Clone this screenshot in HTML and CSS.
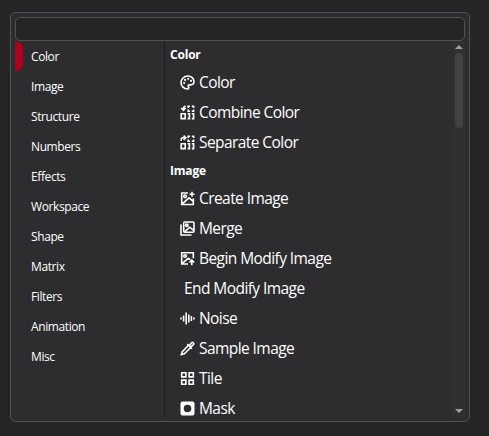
FILE: index.html
```html
<!DOCTYPE html>
<html lang="en">
<head>
<meta charset="utf-8">
<title>Add Node</title>
<link rel="stylesheet" href="styles.css">
</head>
<body>
<main class="picker">
  <input class="search" type="text" aria-label="Search">
  <div class="body">
    <nav class="categories">
      <a class="category active">Color</a>
      <a class="category">Image</a>
      <a class="category">Structure</a>
      <a class="category">Numbers</a>
      <a class="category">Effects</a>
      <a class="category">Workspace</a>
      <a class="category">Shape</a>
      <a class="category">Matrix</a>
      <a class="category">Filters</a>
      <a class="category">Animation</a>
      <a class="category">Misc</a>
    </nav>
    <section class="nodes">
      <h2 class="group">Color</h2>
      <div class="node"><svg class="icon" viewBox="0 0 15 15"><path d="M7.7 14C3.8 14 1 11.1 1 7.6S4 1 7.7 1s6.3 2.5 6.3 5.6c0 2.3-1.5 3.3-3.3 3.3H9.3c-1 0-1.4.8-.9 1.6.6 1 .5 2.5-.7 2.5z"/><g class="solid"><circle cx="4.1" cy="8" r="1.1"/><circle cx="5.1" cy="4.9" r="1.1"/><circle cx="8.2" cy="3.8" r="1.1"/><circle cx="11" cy="5.8" r="1.1"/></g></svg><span>Color</span></div>
      <div class="node"><svg class="icon" viewBox="0 0 15 15"><path d="M5.7 1.3C3.7 1.3 3.4 2 3.4 4.4M1.2 3l2.2 2.3L5.6 3M1.2 8.8h4v4.8h-4zM7.6 8.8h1.8v4.8H7.6M11.8 8.8h1.8v4.8h-1.8M8.2 3V1.2H10M11.8 1.2h1.8V3M13.6 4.6v1.6h-1.8M10 6.2H8.2V4.6"/></svg><span>Combine Color</span></div>
      <div class="node"><svg class="icon" viewBox="0 0 15 15"><path d="M1.2 6V4.7c0-1.2.6-1.9 1.8-1.9h2.4M3.6.7l2.2 2.1-2.2 2.2M1.2 8.8h4v4.8h-4zM7.6 8.8h1.8v4.8H7.6M11.8 8.8h1.8v4.8h-1.8M8.2 3V1.2H10M11.8 1.2h1.8V3M13.6 4.6v1.6h-1.8M10 6.2H8.2V4.6"/></svg><span>Separate Color</span></div>
      <h2 class="group">Image</h2>
      <div class="node"><svg class="icon" viewBox="0 0 15 15"><path d="M8 2H1.7v11.5h11.6V7.4M2 13.2l7-6.3 4.2 3.5M9.5 3.2h5M12 .7v5"/><circle cx="5" cy="5.3" r="1.3"/></svg><span>Create Image</span></div>
      <div class="node"><svg class="icon" viewBox="0 0 15 15"><rect x="3.7" y="1" width="10.3" height="10.3" rx="1"/><path d="M1 3.5V14h10.5M4.5 10.8l5.2-4.6 4 3.2"/><circle cx="6.8" cy="4.2" r="1.2"/></svg><span>Merge</span></div>
      <div class="node"><svg class="icon" viewBox="0 0 15 15"><path d="M8 13H1.7V1.7h11.6v5.6M2 12.7l6.3-5.5 2 1.4M11.8 14.3V9.5M9.4 11.5l2.4-2.4 2.4 2.4"/><circle cx="5" cy="5" r="1.3"/></svg><span>Begin Modify Image</span></div>
      <div class="node plain"><span>End Modify Image</span></div>
      <div class="node"><svg class="icon" viewBox="0 0 15 15"><path d="M1 6.5v2M3.6 4.5v6M6.2 1.5v12M8.8 3.5v8M11.4 5v5M14 6.5v2"/></svg><span>Noise</span></div>
      <div class="node"><svg class="icon" viewBox="0 0 15 15"><path d="M8.5 4.3 2.3 10.7 1.4 13.6l2.9-.9 6.4-6.2M7.3 3l4.7 4.7M9.2 4.8l2.4-3c1-1 2.8.6 1.8 1.8l-3 2.5z"/></svg><span>Sample Image</span></div>
      <div class="node"><svg class="icon" viewBox="0 0 15 15"><path d="M1.7 1.7h4.2v4.2H1.7zM9.1 1.7h4.2v4.2H9.1zM1.7 9.1h4.2v4.2H1.7zM9.1 9.1h4.2v4.2H9.1z"/></svg><span>Tile</span></div>
      <div class="node"><svg class="icon" viewBox="0 0 15 15"><path class="solid" fill-rule="evenodd" d="M2.5.5h10a2 2 0 0 1 2 2v10a2 2 0 0 1-2 2h-10a2 2 0 0 1-2-2v-10a2 2 0 0 1 2-2zM7.5 3.7a3.8 3.8 0 1 0 0 7.6 3.8 3.8 0 0 0 0-7.6z"/></svg><span>Mask</span></div>
    </section>
    <div class="scrollbar">
      <svg class="arrow" viewBox="0 0 8 4"><path d="M0 4 4 0l4 4z"/></svg>
      <div class="thumb"></div>
      <svg class="arrow down" viewBox="0 0 8 4"><path d="M0 0h8L4 4z"/></svg>
    </div>
  </div>
</main>
</body>
</html>
```
FILE: styles.css
```css
* { box-sizing: border-box; }

body {
  margin: 0;
  height: 436px;
  padding: 12px 19px 14px 10px;
  overflow: hidden;
  background: #252525;
  color: #fff;
  font-family: "Open Sans", "Noto Sans", sans-serif;
}

.picker {
  display: flex;
  flex-direction: column;
  height: 410px;
  padding: 4px;
  border: 1px solid #525252;
  border-radius: 5px;
  background: #2d2d2f;
}

.search {
  width: 100%;
  height: 24px;
  flex: none;
  border: 1px solid #525252;
  border-radius: 5px;
  background: #252525;
  color: inherit;
  outline: none;
}

.body {
  display: flex;
  flex: 1;
  min-height: 0;
}

.categories {
  width: 150px;
  flex: none;
  border-right: 1px solid #1c1c1c;
}

.category {
  display: block;
  height: 30px;
  padding-left: 16px;
  font-size: 12px;
  line-height: 31px;
  letter-spacing: -0.4px;
}

.active {
  display: flex;
  padding-left: 0;
}

.active::before {
  content: "";
  width: 8px;
  margin-right: 8px;
  border-radius: 0 8px 8px 0;
  background: #b00020;
}

.nodes {
  flex: 1;
  padding: 1px 0 0 5px;
  overflow: hidden;
}

.group {
  height: 26px;
  margin: 0;
  font-size: 12px;
  font-weight: 700;
  line-height: 26px;
  letter-spacing: -0.2px;
}

.node {
  display: flex;
  align-items: center;
  gap: 4px;
  height: 30px;
  padding: 0 0 1px 10px;
  font-size: 15.5px;
  line-height: 17px;
  letter-spacing: -0.57px;
  white-space: nowrap;
}

.plain { padding-left: 14px; }

.icon {
  width: 15px;
  height: 15px;
  flex: none;
  fill: none;
  stroke: #fff;
  stroke-width: 1.6;
}

.solid { fill: #fff; stroke: none; }

.scrollbar {
  display: flex;
  flex-direction: column;
  align-items: center;
  width: 12px;
  padding: 4px 0;
  background: #303030;
}

.arrow {
  width: 8px;
  height: 4px;
  fill: #9f9f9f;
}

.thumb {
  width: 8px;
  height: 75px;
  margin-top: 4px;
  border-radius: 4px;
  background: #424242;
}

.down { margin-top: auto; }
```
